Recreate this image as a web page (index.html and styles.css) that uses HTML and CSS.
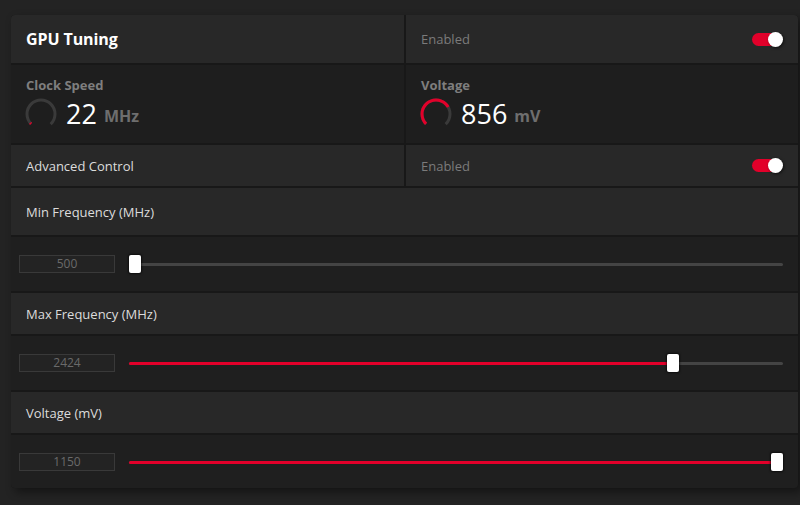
FILE: index.html
```html
<!DOCTYPE html>
<html lang="en">
<head>
    <meta charset="UTF-8">
    <meta name="viewport" content="width=device-width, initial-scale=1.0">
    <title>GPU Tuning</title>
    <link rel="stylesheet" href="styles.css">
</head>
<body>
    <div class="panel">
        <div class="row split">
            <div class="cell head"><h1>GPU Tuning</h1></div>
            <div class="cell head">
                <span class="state">Enabled</span>
                <span class="toggle on"><span class="knob"></span></span>
            </div>
        </div>
        <div class="row split">
            <div class="cell metric">
                <div class="metric-name">Clock Speed</div>
                <div class="metric-value">
                    <svg class="gauge" width="32" height="32" viewBox="0 0 32 32">
                        <circle class="gauge-bg" cx="16" cy="16" r="14" stroke-dasharray="65.97 87.96" transform="rotate(135 16 16)"/>
                        <circle class="gauge-fill" cx="16" cy="16" r="14" stroke-dasharray="1.4 87.96" transform="rotate(135 16 16)"/>
                    </svg>
                    <span class="num">22</span><span class="unit">MHz</span>
                </div>
            </div>
            <div class="cell metric">
                <div class="metric-name">Voltage</div>
                <div class="metric-value">
                    <svg class="gauge" width="32" height="32" viewBox="0 0 32 32">
                        <circle class="gauge-bg" cx="16" cy="16" r="14" stroke-dasharray="65.97 87.96" transform="rotate(135 16 16)"/>
                        <circle class="gauge-fill" cx="16" cy="16" r="14" stroke-dasharray="47.5 87.96" transform="rotate(135 16 16)"/>
                    </svg>
                    <span class="num">856</span><span class="unit">mV</span>
                </div>
            </div>
        </div>
        <div class="row split">
            <div class="cell small"><span class="label">Advanced Control</span></div>
            <div class="cell small">
                <span class="state">Enabled</span>
                <span class="toggle on"><span class="knob"></span></span>
            </div>
        </div>

        <div class="row label-row first"><span class="label">Min Frequency (MHz)</span></div>
        <div class="row slider-row">
            <div class="value-box">500</div>
            <div class="slider" style="--v: 0">
                <div class="track"><div class="fill"></div></div>
                <div class="thumb"></div>
            </div>
        </div>

        <div class="row label-row"><span class="label">Max Frequency (MHz)</span></div>
        <div class="row slider-row">
            <div class="value-box">2424</div>
            <div class="slider" style="--v: 0.838">
                <div class="track"><div class="fill"></div></div>
                <div class="thumb"></div>
            </div>
        </div>

        <div class="row label-row"><span class="label">Voltage (mV)</span></div>
        <div class="row slider-row last">
            <div class="value-box">1150</div>
            <div class="slider" style="--v: 1">
                <div class="track"><div class="fill"></div></div>
                <div class="thumb"></div>
            </div>
        </div>
    </div>
</body>
</html>
```

FILE: styles.css
```css
body {
    margin: 0;
    padding: 15px 2px 17px 11px;
    background: #232323;
    font-family: 'Open Sans', 'Noto Sans', sans-serif;
    color: #dcdcdc;
    overflow: hidden;
}
.panel {
    display: flex;
    flex-direction: column;
    gap: 2px;
    background: #181818;
    border-radius: 4px;
    overflow: hidden;
    box-shadow: 4px 4px 10px rgba(0, 0, 0, 0.45);
}
.row {
    background: #282828;
}
.split {
    display: grid;
    grid-template-columns: 393px 1fr;
    gap: 2px;
    background: #181818;
}
.cell {
    display: flex;
    align-items: center;
    justify-content: space-between;
    padding: 0 15px;
    background: #282828;
}
.head {
    height: 48px;
}
.small {
    height: 41px;
}
h1 {
    margin: 0;
    font-size: 16px;
    font-weight: 700;
    color: #fff;
    letter-spacing: -0.1px;
}
.state {
    font-size: 13px;
    color: #7b7b7b;
}
.label {
    font-size: 13px;
    color: #dcdcdc;
}
.toggle {
    position: relative;
    width: 31px;
    height: 13px;
}
.toggle::before {
    content: '';
    position: absolute;
    left: 0;
    right: 4px;
    top: 0;
    bottom: 0;
    border-radius: 7px;
    background: #e2002a;
}
.toggle .knob {
    position: absolute;
    right: 0;
    top: -1px;
    width: 15px;
    height: 15px;
    border-radius: 50%;
    background: #fff;
    box-shadow: 1px 1px 3px rgba(0, 0, 0, 0.6);
}
/* metric row */
.metric {
    flex-direction: column;
    align-items: flex-start;
    justify-content: flex-start;
    height: 78px;
    box-sizing: border-box;
    padding-top: 11px;
    background: #1e1e1e;
}
.metric-name {
    font-size: 13px;
    font-weight: 700;
    color: #7e7e7e;
    line-height: 18px;
}
.metric-value {
    display: flex;
    align-items: center;
    margin-top: 4px;
    margin-left: -1px;
}
.gauge {
    display: block;
    margin-right: 9px;
}
.gauge circle {
    fill: none;
    stroke-width: 3;
}
.gauge-bg {
    stroke: #3a3a3a;
}
.gauge-fill {
    stroke: #e2002a;
}
.num {
    font-size: 27px;
    font-weight: 400;
    color: #fff;
    line-height: 32px;
}
.unit {
    margin-left: 7px;
    font-size: 16px;
    font-weight: 700;
    color: #6e6e6e;
    padding-top: 4px;
}
/* sliders */
.label-row {
    display: flex;
    align-items: center;
    height: 41px;
    padding: 0 15px;
}
.label-row.first {
    height: 47px;
}
.slider-row {
    display: flex;
    align-items: center;
    gap: 14px;
    height: 54px;
    padding: 0 15px 0 8px;
    background: #1f1f1f;
}
.slider-row.last {
    height: 53px;
}
.value-box {
    width: 94px;
    height: 16px;
    border: 1px solid #393939;
    background: #232323;
    color: #6a6a6a;
    font-size: 12px;
    line-height: 16px;
    text-align: center;
}
.slider {
    position: relative;
    flex: 1;
    height: 18px;
}
.track {
    position: absolute;
    left: 0;
    right: 0;
    top: 8px;
    height: 3px;
    border-radius: 2px;
    background: #444;
}
.fill {
    height: 100%;
    width: calc((100% - 12px) * var(--v) + 6px);
    border-radius: 2px;
    background: #e2002a;
}
.thumb {
    position: absolute;
    top: 0;
    left: calc((100% - 12px) * var(--v));
    width: 12px;
    height: 18px;
    box-sizing: border-box;
    border-radius: 2px;
    background: #fff;
    box-shadow: 0 0 2px 1px rgba(0, 0, 0, 0.6);
}
```
